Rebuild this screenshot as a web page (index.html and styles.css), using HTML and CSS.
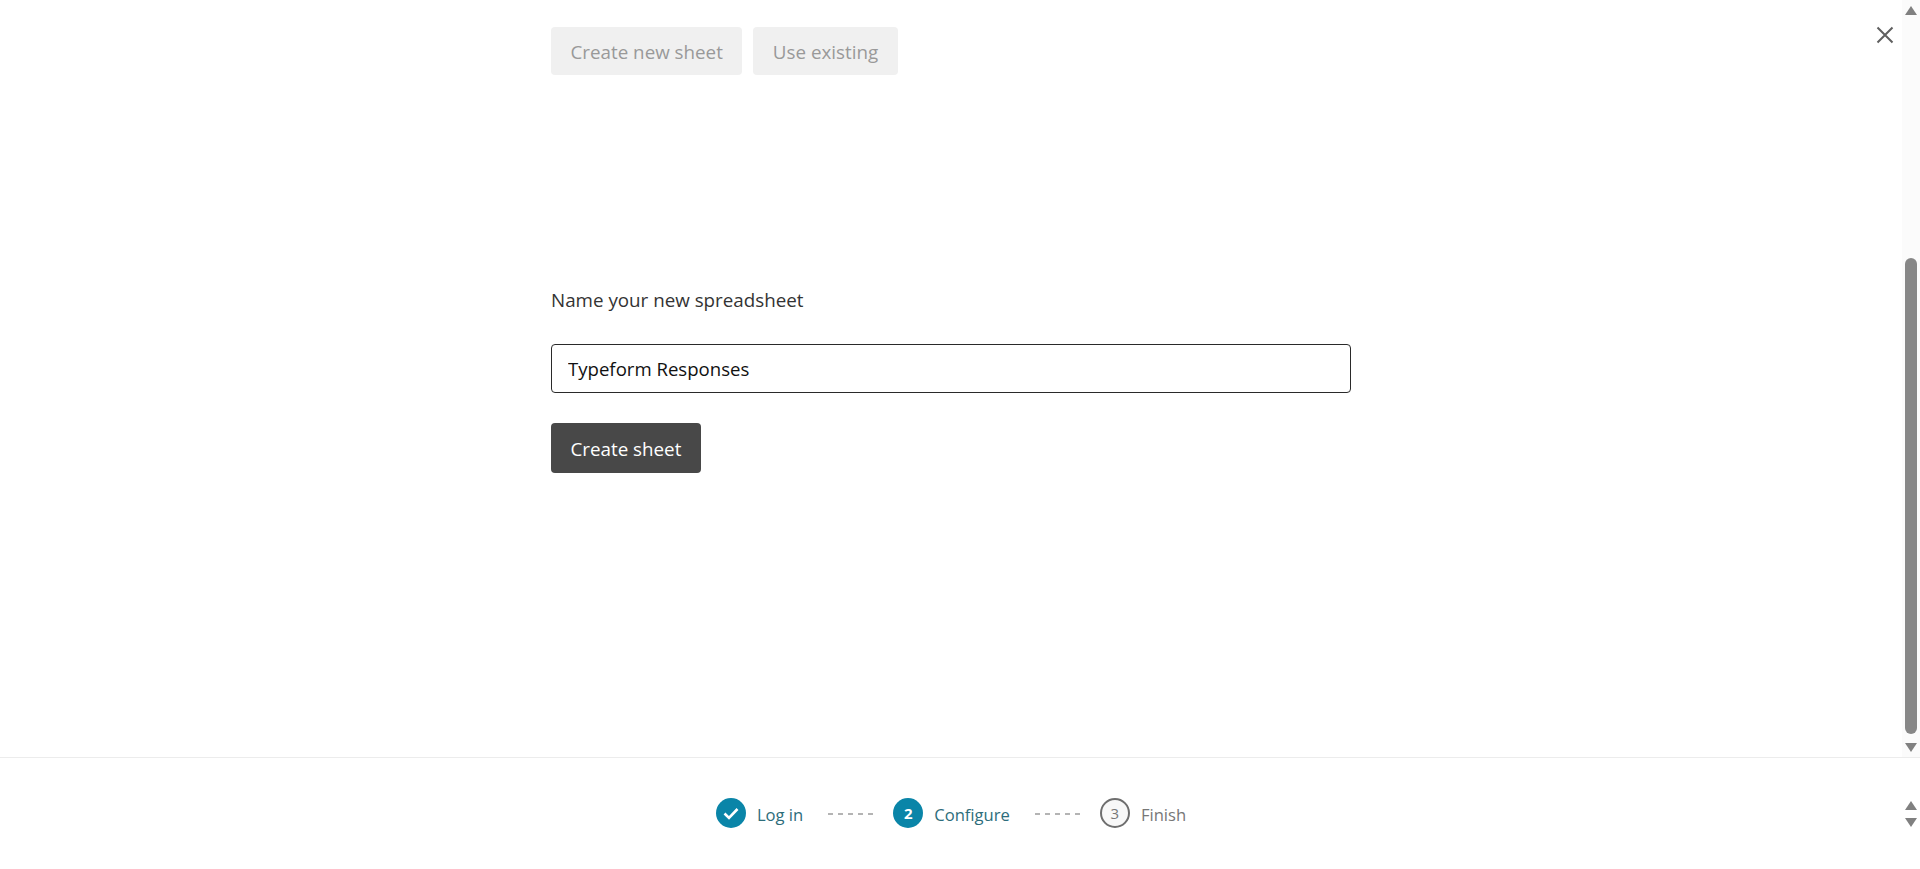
FILE: index.html
```html
<!DOCTYPE html>
<html lang="en">
  <head>
    <meta charset="utf-8" />
    <meta name="viewport" content="width=device-width, initial-scale=1" />
    <title>Create sheet</title>
    <link rel="stylesheet" href="styles.css">
  </head>
  <body>
    <div class="top">
      <main class="content">
        <div class="tabs">
          <button type="button" class="tab">Create new sheet</button>
          <button type="button" class="tab">Use existing</button>
        </div>

        <form class="sheet-form">
          <label for="sheetName">Name your new spreadsheet</label>
          <input type="text" id="sheetName" value="Typeform Responses" />
          <button type="button" class="primary">Create sheet</button>
        </form>
      </main>

      <div class="scrollbar">
        <span class="arrow-up"></span>
        <span class="thumb"></span>
        <span class="arrow-down"></span>
      </div>

      <button type="button" class="close" aria-label="Close">
        <svg width="18" height="18" viewBox="0 0 18 18">
          <path d="M1.5 1.5 L16.5 16.5 M16.5 1.5 L1.5 16.5" stroke="#5f5f5f" stroke-width="2" fill="none" />
        </svg>
      </button>
    </div>

    <footer class="footer">
      <ol class="steps">
        <li class="step done">
          <span class="circle">
            <svg width="16" height="13" viewBox="0 0 16 13">
              <path d="M1.5 6.5 L6 11 L14.5 2" stroke="#fff" stroke-width="2.6" fill="none" />
            </svg>
          </span>
          <span class="step-label">Log in</span>
        </li>
        <li class="dashes"></li>
        <li class="step current">
          <span class="circle">2</span>
          <span class="step-label">Configure</span>
        </li>
        <li class="dashes"></li>
        <li class="step">
          <span class="circle">3</span>
          <span class="step-label">Finish</span>
        </li>
      </ol>

      <div class="footer-arrows">
        <span class="arrow-up"></span>
        <span class="arrow-down"></span>
      </div>
    </footer>
  </body>
</html>
```

FILE: styles.css
```css
* {
  box-sizing: border-box;
}
body {
  margin: 0;
  height: 869px;
  display: flex;
  flex-direction: column;
  overflow: hidden;
  font-family: "Open Sans", "Noto Sans", Arial, sans-serif;
  font-size: 18.8px;
  color: #333;
  background: #fff;
}
button {
  font-family: inherit;
  font-size: 18.8px;
  border: none;
  border-radius: 4px;
  padding: 1px 19.5px 0;
}

.top {
  position: relative;
  flex: 1;
  display: flex;
  border-bottom: 1px solid #ececec;
}
.content {
  flex: 1;
  display: flex;
  flex-direction: column;
  align-items: center;
  padding-top: 27px;
}
.tabs,
.sheet-form {
  width: 800px;
}
.tabs {
  display: flex;
  gap: 11px;
}
.tab {
  height: 48px;
  background: #f0f0f0;
  color: #999;
}
.sheet-form {
  display: flex;
  flex-direction: column;
  align-items: flex-start;
  margin-top: 210px;
}
.sheet-form label {
  line-height: 30px;
  margin-bottom: 29px;
}
.sheet-form input {
  width: 100%;
  height: 49px;
  padding: 0 16px;
  border: 1px solid #2a2a2a;
  border-radius: 4px;
  font-family: inherit;
  font-size: 18.6px;
  color: #111;
  margin-bottom: 30px;
}
.primary {
  height: 50px;
  background: #484848;
  color: #fff;
}
.close {
  position: absolute;
  top: 26px;
  right: 26px;
  padding: 0;
  background: none;
  line-height: 0;
}

.scrollbar {
  width: 18px;
  padding-top: 6px;
  display: flex;
  flex-direction: column;
  align-items: center;
  background: #fbfbfb;
}
.thumb {
  width: 12px;
  height: 476px;
  margin-top: 243px;
  margin-bottom: 9px;
  border-radius: 6px;
  background: #878787;
}
.arrow-up,
.arrow-down {
  display: block;
  width: 0;
  height: 0;
  border-left: 6px solid transparent;
  border-right: 6px solid transparent;
}
.arrow-up {
  border-bottom: 9px solid #808080;
}
.arrow-down {
  border-top: 9px solid #808080;
}

.footer {
  height: 111px;
  display: flex;
}
.steps {
  flex: 1;
  display: flex;
  align-items: flex-start;
  justify-content: center;
  gap: 20px;
  margin: 0;
  padding: 40px 0 0;
  list-style: none;
}
.step {
  display: flex;
  align-items: center;
  gap: 11px;
  height: 30px;
  font-size: 16.6px;
  color: #777;
}
.step-label {
  margin-top: 2px;
}
.circle {
  width: 30px;
  height: 30px;
  border-radius: 50%;
  display: flex;
  align-items: center;
  justify-content: center;
  border: 2px solid #6e6e6e;
  background: #f8f8f8;
  font-size: 15px;
  line-height: 26px;
  color: #777;
}
.done,
.current {
  color: #2d6d7b;
}
.done .circle,
.current .circle {
  border: none;
  background: #0a85a8;
  color: #fff;
  font-weight: 700;
}
.dashes {
  width: 45px;
  height: 2px;
  margin-top: 15px;
  margin-left: 5px;
  background: repeating-linear-gradient(to right, #b4b4b4 0, #b4b4b4 5px, transparent 5px, transparent 10px);
}
.footer-arrows {
  width: 18px;
  padding-top: 43px;
  display: flex;
  flex-direction: column;
  align-items: center;
  gap: 8px;
}
```
